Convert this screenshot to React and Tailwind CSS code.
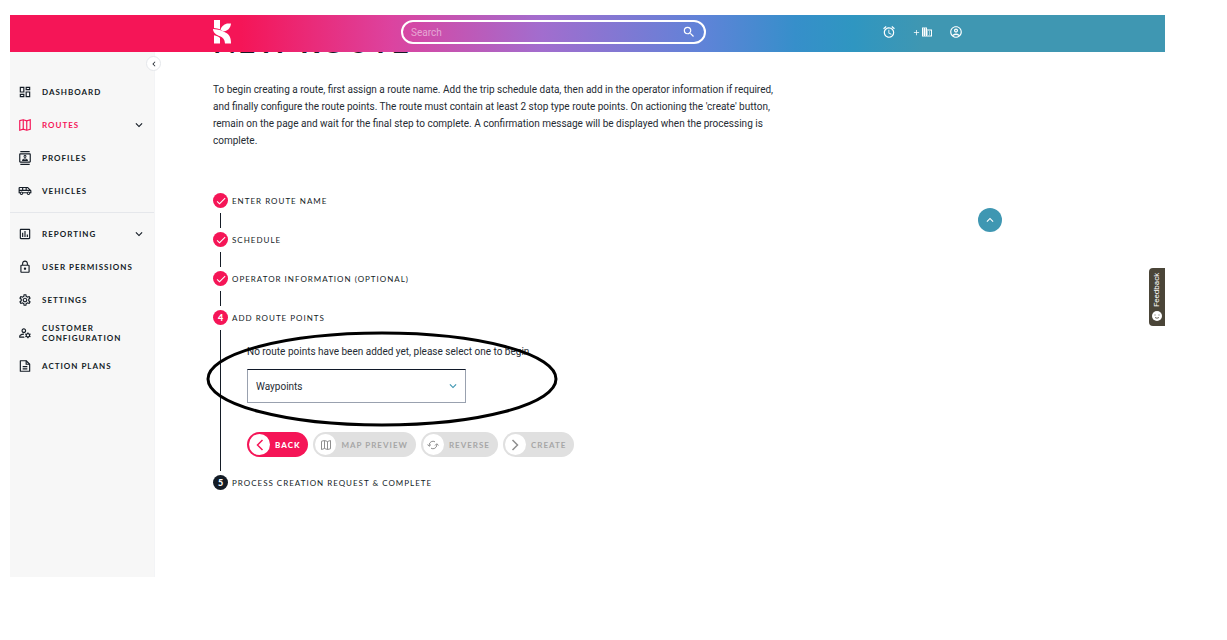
import React, { useState } from 'react';
import {
  MdAdd,
  MdAlarm,
  MdCheck,
  MdDomain,
  MdKeyboardArrowDown,
  MdKeyboardArrowLeft,
  MdKeyboardArrowUp,
  MdLockOutline,
  MdOutlineAccountCircle,
  MdOutlineAirportShuttle,
  MdOutlineAssessment,
  MdOutlineContacts,
  MdOutlineDashboard,
  MdOutlineManageAccounts,
  MdOutlineSettings,
  MdSearch,
} from 'react-icons/md';

const MapIcon = ({ className }) => (
  <svg viewBox="0 0 24 24" fill="none" stroke="currentColor" strokeWidth="2" className={className}>
    <path d="M3 4.500 9 3l6 2 6-2v16.500L15 21l-6-2-6 2z" />
    <path d="M9 3v16M15 5v16" />
  </svg>
);

const DocIcon = ({ className }) => (
  <svg viewBox="0 0 24 24" fill="none" stroke="currentColor" strokeWidth="2" className={className}>
    <path d="M4 3h10l6 6v12H4z" strokeLinejoin="round" />
    <path d="M14 3v6h6M8 13h8M8 17h8" />
  </svg>
);

const BackIcon = ({ className }) => (
  <svg viewBox="0 0 12 12" fill="none" stroke="currentColor" strokeWidth="1.5" className={className}>
    <path d="M8.500 1 3.500 6l5 5" />
  </svg>
);

const NextIcon = ({ className }) => (
  <svg viewBox="0 0 12 12" fill="none" stroke="currentColor" strokeWidth="1.5" className={className}>
    <path d="M3.500 1l5 5-5 5" />
  </svg>
);

const ReverseIcon = ({ className }) => (
  <svg viewBox="0 0 12 12" fill="none" stroke="currentColor" className={className}>
    <path d="M2.200 7V6A3.800 3.800 0 0 1 8 2.800M9.800 5v1A3.800 3.800 0 0 1 4 9.200" />
    <path d="M.4 5.500l1.800 1.800L4 5.500M8 6.500l1.800-1.800 1.800 1.800" />
  </svg>
);

const Logo = () => (
  <svg viewBox="0 0 18 24" fill="white" className="h-6 w-[18px]" aria-hidden="true">
    <path d="M1 0h6v9.200C5.300 8.600 3.200 8.200 1 8z" />
    <path d="M18 3.400h-4C10.500 4.500 8 7 7.500 9.800l2.500 1.400C14.500 11.200 17.500 8 18 3.400z" />
    <path d="M0 9c5.500.2 10.500 2 13.800 4.300 3 2.200 4.200 5 4.200 10.200h-6c-.2-4-2.200-6-5-7.200C3.200 14.800.2 13 0 9z" />
    <path d="M1 15.200c2.400.6 4.500 1.500 6 2.700v5.600H1z" />
  </svg>
);

const mainLinks = [
  { label: 'Dashboard', icon: MdOutlineDashboard },
  { label: 'Routes', icon: MapIcon, active: true, expandable: true },
  { label: 'Profiles', icon: MdOutlineContacts },
  { label: 'Vehicles', icon: MdOutlineAirportShuttle },
];

const adminLinks = [
  { label: 'Reporting', icon: MdOutlineAssessment, expandable: true },
  { label: 'User Permissions', icon: MdLockOutline },
  { label: 'Settings', icon: MdOutlineSettings },
  { label: 'Customer Configuration', icon: MdOutlineManageAccounts },
  { label: 'Action Plans', icon: DocIcon },
];

const NavList = ({ links }) => (
  <ul>
    {links.map(({ label, icon: Icon, active, expandable }) => (
      <li key={label}>
        <a
          href="#"
          className={`flex h-[33px] items-center px-2 font-[Lato,sans-serif] text-[8px] font-bold leading-[10px] tracking-[1px] uppercase ${active ? 'text-[#f51557]' : 'text-[#141c26]'}`}
        >
          <Icon className="h-[14px] w-[14px] shrink-0" />
          <span className="ml-[10px] flex-1">{label}</span>
          {expandable && <MdKeyboardArrowDown className="h-[14px] w-[14px] text-[#141c26]" />}
        </a>
      </li>
    ))}
  </ul>
);

const Header = () => (
  <header className="relative z-10 flex h-[37px] items-center bg-[linear-gradient(90deg,#f51557_20%,#dc439f_33%,#a26dce_46%,#5f83d8_60%,#368fca_68%,#2f96c1_73%,#3f97b2_79%)] pb-[3px] pl-[203px] pr-[202px] text-white">
    <Logo />
    <div className="relative ml-[170px] flex w-[305px] items-center">
      <input
        type="text"
        aria-label="Search"
        placeholder="Search"
        className="h-6 w-full rounded-full border-2 border-white bg-transparent pl-2 pr-8 text-[10px] placeholder:text-white/50 focus:outline-none"
      />
      <MdSearch className="absolute right-[10px] h-[14px] w-[14px]" />
    </div>
    <div className="ml-auto flex items-center gap-4">
      <button aria-label="Reminders">
        <MdAlarm className="h-[14px] w-[14px]" />
      </button>
      <button aria-label="Add company" className="flex items-center">
        <MdAdd className="h-[9px] w-[9px]" />
        <MdDomain className="h-3 w-3" />
      </button>
      <button aria-label="Account">
        <MdOutlineAccountCircle className="h-[14px] w-[14px]" />
      </button>
    </div>
  </header>
);

const Sidebar = () => (
  <aside className="relative w-[145px] shrink-0 border-r border-gray-100 bg-[#f7f7f7] pt-[23px]">
    <button
      aria-label="Collapse menu"
      className="absolute -right-[7px] top-1 flex h-[15px] w-[15px] items-center justify-center rounded-full border border-gray-200 bg-white"
    >
      <MdKeyboardArrowLeft className="h-[10px] w-[10px]" />
    </button>
    <nav>
      <NavList links={mainLinks} />
      <hr className="mt-[5px] mb-1 border-gray-200" />
      <NavList links={adminLinks} />
    </nav>
  </aside>
);

const Step = ({ number, title, done, active, last, children }) => (
  <li>
    <div className="flex h-[15px] items-center gap-1 font-[Lato,sans-serif] text-[#141c26]">
      <span
        className={`flex h-[15px] w-[15px] items-center justify-center rounded-full text-[9px] font-black text-white ${done || active ? 'bg-[#f51557]' : 'bg-[#141c26]'}`}
      >
        {done ? <MdCheck className="h-3 w-3" /> : number}
      </span>
      <h2 className="text-[8px] leading-[10px] tracking-[1px] uppercase">{title}</h2>
    </div>
    {!last && (
      <div className="mt-[5px] mb-1 ml-[7px] min-h-[15px] border-l border-[#141c26]">{children}</div>
    )}
  </li>
);

const PillButton = ({ icon: Icon, label, disabled }) => (
  <button
    disabled={disabled}
    className={`flex h-[25px] items-center gap-[5px] rounded-full pl-[2px] pr-2 font-[Lato,sans-serif] text-[8px] tracking-[1px] uppercase ${disabled ? 'bg-[#e0e0e0] font-bold text-[#a6a6a6]' : 'bg-[#f51557] font-black text-white'}`}
  >
    <span
      className={`flex h-[21px] w-[21px] items-center justify-center rounded-full bg-white ${disabled ? 'text-[#8f8f8f]' : 'text-[#f51557]'}`}
    >
      <Icon className="h-3 w-3" />
    </span>
    {label}
  </button>
);

const RoutePoints = () => {
  const [pointType, setPointType] = useState('Waypoints');

  return (
    <div className="relative pl-[26px] pt-[14px] pb-[14px]">
      <label htmlFor="point-type" className="block text-[10px] leading-4">
        No route points have been added yet, please select one to begin.
      </label>
      <div className="relative mt-[9px] w-[219px]">
        <select
          id="point-type"
          value={pointType}
          onChange={(e) => setPointType(e.target.value)}
          className="h-[34px] w-full appearance-none border border-gray-400 border-t-gray-900 bg-white px-2 text-[10px]"
        >
          <option>Waypoints</option>
          <option>Stops</option>
        </select>
        <MdKeyboardArrowDown className="pointer-events-none absolute right-[6px] top-[10px] h-[14px] w-[14px] text-[#3f97b2]" />
      </div>
      <div className="mt-[29px] flex gap-[5px]">
        <PillButton icon={BackIcon} label="Back" />
        <PillButton icon={MapIcon} label="Map Preview" disabled />
        <PillButton icon={ReverseIcon} label="Reverse" disabled />
        <PillButton icon={NextIcon} label="Create" disabled />
      </div>
      {/* hand drawn ring round the point picker */}
      <svg
        viewBox="0 0 352 96"
        fill="none"
        stroke="black"
        strokeWidth="3"
        className="pointer-events-none absolute -left-[15px] top-[1px] h-24 w-[352px]"
        aria-hidden="true"
      >
        <ellipse cx="176" cy="48" rx="174" ry="46" />
      </svg>
    </div>
  );
};

const App = () => (
  <div className="bg-white pt-[15px] pr-[62px] pb-[63px] pl-[10px] font-[Roboto,sans-serif] text-[#252b33]">
    <div className="relative">
      <Header />
      <div className="flex min-h-[525px]">
        <Sidebar />
        <main className="-mt-[27px] flex-1 pl-[58px]">
          <h1 className="font-[Lato,sans-serif] text-3xl leading-8 font-bold tracking-[2px] text-[#141c26] uppercase">
            New Route
          </h1>
          <p className="mt-6 max-w-[572px] text-[10px] leading-[17px]">
            To begin creating a route, first assign a route name. Add the trip schedule data, then add in the operator
            information if required, and finally configure the route points. The route must contain at least 2 stop type
            route points. On actioning the 'create' button, remain on the page and wait for the final step to complete. A
            confirmation message will be displayed when the processing is complete.
          </p>
          <ol className="mt-11">
            <Step number={1} title="Enter Route Name" done />
            <Step number={2} title="Schedule" done />
            <Step number={3} title="Operator Information (Optional)" done />
            <Step number={4} title="Add Route Points" active>
              <RoutePoints />
            </Step>
            <Step number={5} title="Process Creation Request & Complete" last />
          </ol>
        </main>
      </div>
      <button
        aria-label="Back to top"
        className="absolute right-[163px] top-[193px] flex h-6 w-6 items-center justify-center rounded-full bg-[#3f97b2] text-white"
      >
        <MdKeyboardArrowUp className="h-[14px] w-[14px]" />
      </button>
      <button className="absolute right-0 top-[253px] flex h-[58px] w-4 rotate-180 items-center justify-center gap-1 rounded-r-sm bg-[#4a4538] text-[8px] leading-4 text-white [writing-mode:vertical-rl]">
        <svg viewBox="0 0 10 10" className="h-[10px] w-[10px] rotate-180" aria-hidden="true">
          <circle cx="5" cy="5" r="5" fill="white" />
          <path d="M3 3.500v1M7 3.500v1M3 6.500q2 1.500 4 0" fill="none" stroke="#4a4538" strokeWidth=".8" />
        </svg>
        Feedback
      </button>
    </div>
  </div>
);

export default App;
